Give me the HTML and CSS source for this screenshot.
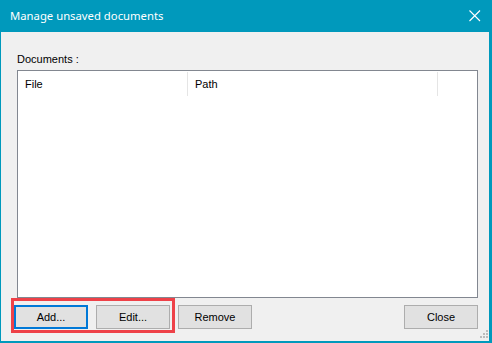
FILE: index.html
```html
<!DOCTYPE html>
<html>
<head>
    <title>Manage unsaved documents</title>
    <link rel="stylesheet" href="styles.css">
</head>
<body>
    <div class="window">
        <div class="titlebar">
            <span class="title">Manage unsaved documents</span>
            <svg class="close-x" width="12" height="12" viewBox="0 0 12 12">
                <path d="M0.5 0.5 L11 11 M11 0.5 L0.5 11" stroke="#fff" stroke-width="1.1" fill="none"/>
            </svg>
        </div>
        <div class="content">
            <div class="label">Documents :</div>
            <div class="listbox">
                <div class="list-header">
                    <div class="col col-file">File</div>
                    <div class="col col-path">Path</div>
                    <div class="col col-rest"></div>
                </div>
            </div>
            <div class="buttons">
                <button class="btn focused">Add...</button>
                <button class="btn">Edit...</button>
                <button class="btn">Remove</button>
                <button class="btn close-btn">Close</button>
            </div>
            <div class="highlight"></div>
            <svg class="grip" width="12" height="12" viewBox="0 0 12 12">
                <rect x="9" y="1" width="2" height="2" fill="#bcbcbc"/>
                <rect x="6" y="4" width="2" height="2" fill="#bcbcbc"/>
                <rect x="9" y="4" width="2" height="2" fill="#bcbcbc"/>
                <rect x="3" y="7" width="2" height="2" fill="#bcbcbc"/>
                <rect x="6" y="7" width="2" height="2" fill="#bcbcbc"/>
                <rect x="9" y="7" width="2" height="2" fill="#bcbcbc"/>
            </svg>
        </div>
    </div>
</body>
</html>
```

FILE: styles.css
```css
body {
    margin: 0;
    font-family: "Liberation Sans", Arial, sans-serif;
    font-size: 11px;
    color: #000;
}

.window {
    width: 488px;
    height: 341px;
    border-left: 1px solid #0099bc;
    border-right: 3px solid #0099bc;
    border-bottom: 2px solid #0099bc;
    background-color: #f0f0f0;
    display: flex;
    flex-direction: column;
}

.titlebar {
    height: 32px;
    margin-left: -1px;
    margin-right: -3px;
    background-color: #0099bc;
    display: flex;
    align-items: center;
    padding: 0 11px 0 10px;
}

.title {
    flex: 1;
    color: #fff;
    font-family: "Noto Sans", "Open Sans", sans-serif;
    font-size: 11.3px;
    margin-top: -1px;
}

.close-x {
    display: block;
}

.content {
    position: relative;
    flex: 1;
    padding: 20px 11px 0 16px;
}

.label {
    height: 14px;
    line-height: 14px;
    margin-bottom: 4px;
}

.listbox {
    height: 226px;
    border: 1px solid #828790;
    background-color: #fff;
}

.list-header {
    display: flex;
    height: 24px;
    line-height: 24px;
    padding-top: 1px;
}

.col {
    padding-left: 7px;
    box-sizing: border-box;
}

.col-file {
    width: 170px;
    border-right: 1px solid #e5e5e5;
}

.col-path {
    width: 250px;
    border-right: 1px solid #e5e5e5;
}

.buttons {
    display: flex;
    gap: 8px;
    margin-top: 7px;
    margin-left: -3px;
}

.btn {
    width: 74px;
    height: 24px;
    padding: 0;
    background-color: #e1e1e1;
    border: 1px solid #adadad;
    font-family: "Liberation Sans", Arial, sans-serif;
    font-size: 11px;
    color: #000;
}

.btn.focused {
    border: 2px solid #0078d7;
}

.close-btn {
    margin-left: auto;
}

.highlight {
    position: absolute;
    left: 10px;
    top: 266px;
    width: 158px;
    height: 29px;
    border: 3px solid #ee4148;
}

.grip {
    position: absolute;
    right: 0;
    bottom: 0;
}
```
